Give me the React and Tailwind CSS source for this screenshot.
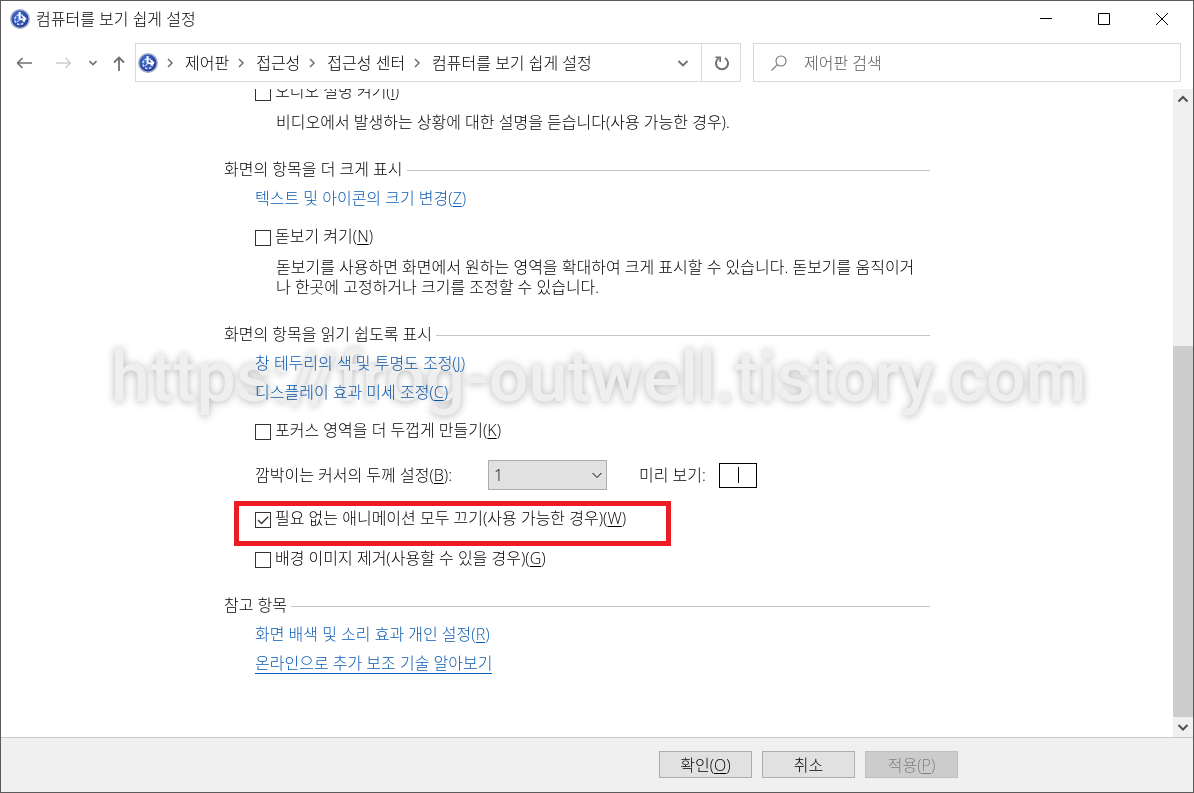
import React, { useState } from 'react';

const crumbs = ['제어판', '접근성', '접근성 센터', '컴퓨터를 보기 쉽게 설정'];

function EaseIcon() {
  return (
    <svg viewBox="0 0 20 20" className="w-5 h-5 shrink-0" aria-hidden="true">
      <defs>
        <radialGradient id="ease" cx="0.4" cy="0.35" r="0.7">
          <stop offset="0" stopColor="#4a76d0" />
          <stop offset="0.6" stopColor="#2c4cb0" />
          <stop offset="1" stopColor="#24348c" />
        </radialGradient>
      </defs>
      <circle cx="10" cy="10" r="9.2" fill="url(#ease)" stroke="#a3acc9" strokeWidth="1.5" />
      <circle cx="9.800" cy="10.600" r="4.900" fill="none" stroke="#c9dafa" strokeWidth="1.600" strokeDasharray="2.600 1.250" />
      <path d="M9.600 3v7.600" fill="none" stroke="#fff" strokeWidth="2" />
      <path d="M9.600 10.600l5.600-.8M12.400 7l3.200 2.800-2.900 2.600" fill="none" stroke="#fff" strokeWidth="1.500" />
      <path d="M9.600 10.600l-2.600 2.600" fill="none" stroke="#b9cef5" strokeWidth="1.200" />
    </svg>
  );
}

function Chevron({ d, className }) {
  return (
    <svg viewBox="0 0 12 12" className={`w-3 h-3 shrink-0 ${className}`} fill="none" stroke="currentColor" aria-hidden="true">
      <path d={d} />
    </svg>
  );
}

const DOWN = 'M1.5 4l4.5 4.5L10.500 4';
const UP = 'M1.500 8.500L6 4l4.500 4.500';
const RIGHT = 'M4 2l4 4-4 4';

function Hotkey({ k }) {
  return (
    <>(<span className="underline underline-offset-2">{k}</span>)</>
  );
}

function CheckRow({ id, label, hotkey, defaultChecked, className }) {
  const [checked, setChecked] = useState(!!defaultChecked);
  return (
    <div className={`flex items-center gap-1 ${className || ''}`}>
      <span className="relative mt-1 w-4 h-4 shrink-0">
        <input
          id={id}
          type="checkbox"
          checked={checked}
          onChange={e => setChecked(e.target.checked)}
          className="block appearance-none w-4 h-4 border border-[#333] bg-white"
        />
        {checked && (
          <svg viewBox="0 0 16 16" className="absolute inset-0 w-4 h-4 pointer-events-none" fill="none" stroke="#333" strokeWidth="1.3">
            <path d="M3 8l3.500 3.500L13.200 4.700" />
          </svg>
        )}
      </span>
      <label htmlFor={id}>{label}<Hotkey k={hotkey} /></label>
    </div>
  );
}

function Section({ title, children }) {
  return (
    <section className="mt-[27px]">
      <div className="flex items-center gap-1">
        <h2>{title}</h2>
        <div className="flex-1 mt-[2px] h-px bg-[#c4c4c4]" />
      </div>
      <div className="pl-[31px] flex flex-col items-start">{children}</div>
    </section>
  );
}

function TaskLink({ children, hotkey }) {
  return (
    <a href="#" className="mt-[9px] text-[#0b5cb5]">
      {children}<Hotkey k={hotkey} />
    </a>
  );
}

function TitleBar() {
  return (
    <header className="flex items-center h-9 shrink-0 pl-[9px] pr-[2px]">
      <EaseIcon />
      <h1 className="ml-[6px] flex-1">컴퓨터를 보기 쉽게 설정</h1>
      <div className="flex h-full text-black">
        <button aria-label="최소화" className="w-[58px] flex items-center justify-center">
          <svg className="w-3 h-3" viewBox="0 0 12 12" stroke="currentColor"><path d="M0 5.500h12" /></svg>
        </button>
        <button aria-label="최대화" className="w-[58px] flex items-center justify-center">
          <svg className="w-3 h-3" viewBox="0 0 12 12" fill="none" stroke="currentColor"><path d="M.5.5h11v11H.5z" /></svg>
        </button>
        <button aria-label="닫기" className="w-[58px] flex items-center justify-center">
          <svg className="w-3 h-3" viewBox="0 0 12 12" stroke="currentColor"><path d="M0 0l12 12M12 0L0 12" /></svg>
        </button>
      </div>
    </header>
  );
}

function AddressBar() {
  return (
    <div className="flex items-center shrink-0 mt-[6px] pl-[14px] pr-3 text-[#707070]">
      <button aria-label="뒤로" className="w-5 flex justify-center">
        <svg className="w-4 h-4" viewBox="0 0 16 16" fill="none" stroke="currentColor" strokeWidth="1.6"><path d="M15 8H.5M5.500 3L.5 8l5 5" /></svg>
      </button>
      <button aria-label="앞으로" disabled className="ml-[18px] w-5 flex justify-center text-[#ccc]">
        <svg className="w-4 h-4" viewBox="0 0 16 16" fill="none" stroke="currentColor" strokeWidth="1.4"><path d="M1 8h14.500M10.500 3l5 5-5 5" /></svg>
      </button>
      <button aria-label="최근 위치" className="ml-3 w-4 flex justify-center">
        <svg className="w-2 h-2" viewBox="0 0 8 8" fill="none" stroke="currentColor" strokeWidth="1.6"><path d="M.5 2L4 5.500 7.500 2" /></svg>
      </button>
      <button aria-label="위로" className="ml-[10px] mr-2 w-4 flex justify-center">
        <svg className="w-4 h-4" viewBox="0 0 16 16" fill="none" stroke="currentColor" strokeWidth="1.8"><path d="M8 16V2.500M3 7.500l5-5 5 5" /></svg>
      </button>
      <div className="flex flex-1 items-center h-[39px] border border-[#d9d9d9] pl-[2px]">
        <EaseIcon />
        <nav className="flex flex-1 items-center text-black">
          {crumbs.map(c => (
            <React.Fragment key={c}>
              <span className="w-[27px] flex justify-center pr-1 text-[#707070]">
                <Chevron d={RIGHT} className="stroke-[1.5]" />
              </span>
              <a href="#">{c}</a>
            </React.Fragment>
          ))}
        </nav>
        <button aria-label="이전 위치" className="w-9 h-full flex items-center justify-center">
          <Chevron d={DOWN} className="stroke-[1.8]" />
        </button>
        <button aria-label="새로 고침" className="w-[39px] h-full flex items-center justify-center border-l border-[#d9d9d9]">
          <svg className="w-4 h-4" viewBox="0 0 16 16" fill="none" stroke="currentColor" strokeWidth="2">
            <path d="M12 3a6 6 0 1 1-6 0" />
            <path d="M2.500 2.200h4.700v4.800" strokeWidth="1.600" />
          </svg>
        </button>
      </div>
      <div className="ml-3 flex items-center w-[428px] h-[39px] border border-[#d9d9d9] pl-[17px]">
        <svg className="w-4 h-4" viewBox="0 0 16 16" fill="none" stroke="#777" strokeWidth="1.1" aria-hidden="true">
          <circle cx="10" cy="6" r="5" />
          <path d="M6.500 9.500L.5 15.500" />
        </svg>
        <input
          type="search"
          aria-label="제어판 검색"
          placeholder="제어판 검색"
          className="ml-[17px] flex-1 min-w-0 bg-transparent outline-none placeholder:text-[#5a5a5a]"
        />
      </div>
    </div>
  );
}

function ScrollBar() {
  return (
    <div className="flex flex-col w-5 shrink-0 bg-[#f0f0f0] text-[#505050]">
      <button aria-label="위로 스크롤" className="h-5 flex items-center justify-center"><Chevron d={UP} className="stroke-2" /></button>
      <div className="flex-1 flex flex-col">
        <div className="flex-[237]" />
        <div className="flex-[370] bg-[#cdcdcd]" />
      </div>
      <button aria-label="아래로 스크롤" className="h-5 flex items-center justify-center"><Chevron d={DOWN} className="stroke-2" /></button>
    </div>
  );
}

export default function App() {
  return (
    <div className="relative flex flex-col h-screen border border-[#5a5a5a] bg-white text-black text-[16px] leading-5 font-light font-['Open_Sans','Noto_Sans_CJK_KR',sans-serif]">
      <TitleBar />
      <AddressBar />

      <div className="flex flex-1 min-h-0 mt-[7px]">
        <main className="relative flex-1 overflow-hidden pl-[223px]">
          <div className="-mt-2 max-w-[706px]">
            <div className="pl-[31px]">
              <CheckRow id="audio" label="오디오 설명 켜기" hotkey="I" />
              <p className="mt-[11px] pl-[21px]">비디오에서 발생하는 상황에 대한 설명을 듣습니다(사용 가능한 경우).</p>
            </div>

            <Section title="화면의 항목을 더 크게 표시">
              <TaskLink hotkey="Z">텍스트 및 아이콘의 크기 변경</TaskLink>
              <CheckRow id="magnifier" label="돋보기 켜기" hotkey="N" className="mt-[18px]" />
              <p className="mt-[11px] pl-[21px] break-all">
                돋보기를 사용하면 화면에서 원하는 영역을 확대하여 크게 표시할 수 있습니다. 돋보기를 움직이거<br />
                나 한곳에 고정하거나 크기를 조정할 수 있습니다.
              </p>
            </Section>

            <Section title="화면의 항목을 읽기 쉽도록 표시">
              <TaskLink hotkey="J">창 테두리의 색 및 투명도 조정</TaskLink>
              <TaskLink hotkey="C">디스플레이 효과 미세 조정</TaskLink>
              <CheckRow id="focus" label="포커스 영역을 더 두껍게 만들기" hotkey="K" className="mt-[18px]" />

              <div className="mt-5 flex items-center">
                <label htmlFor="cursor" className="w-[233px]">깜박이는 커서의 두께 설정<Hotkey k="B" />:</label>
                <div className="relative">
                  <select id="cursor" defaultValue="1" className="block appearance-none w-[119px] h-[30px] pl-[5px] border border-[#adadad] bg-[#e1e1e1]">
                    {[1, 2, 3, 4, 5].map(n => <option key={n}>{n}</option>)}
                  </select>
                  <Chevron d={DOWN} className="absolute right-1 top-[9px] pointer-events-none" />
                </div>
                <span className="ml-8 w-20">미리 보기:</span>
                <div className="w-[38px] h-[25px] flex items-center justify-center border border-black">
                  <div className="w-px h-4 bg-black" />
                </div>
              </div>

              <div className="relative mt-[18px]">
                <CheckRow id="animation" label="필요 없는 애니메이션 모두 끄기(사용 가능한 경우)" hotkey="W" defaultChecked />
                <div className="absolute -left-[21px] -top-[7px] w-[437px] h-[45px] border-[5px] border-[#ed1c24] pointer-events-none" />
              </div>
              <CheckRow id="background" label="배경 이미지 제거(사용할 수 있을 경우)" hotkey="G" className="mt-5" />
            </Section>

            <Section title="참고 항목">
              <TaskLink hotkey="R">화면 배색 및 소리 효과 개인 설정</TaskLink>
              <a href="#" className="mt-[9px] text-[#0b5cb5] border-b border-[#0b5cb5]">온라인으로 추가 보조 기술 알아보기</a>
            </Section>
          </div>

          <div className="absolute left-[110px] top-[244px] whitespace-nowrap text-[70px] leading-[88px] font-medium font-[Roboto,sans-serif] text-[#efefef] [text-shadow:0_1px_8px_rgb(0_0_0/0.3)] mix-blend-multiply pointer-events-none select-none">
            https://frog-outwell.tistory.com
          </div>
        </main>
        <ScrollBar />
      </div>

      <footer className="flex items-center justify-end gap-[10px] h-[55px] shrink-0 pr-[235px] pb-px border-t border-[#c8c8c8] bg-[#f0f0f0]">
        <button className="w-[93px] h-[27px] border border-[#adadad] bg-[#e1e1e1]">확인<Hotkey k="O" /></button>
        <button className="w-[93px] h-[27px] border border-[#adadad] bg-[#e1e1e1]">취소</button>
        <button disabled className="w-[93px] h-[27px] border border-[#bfbfbf] bg-[#cccccc] text-[#808080]">적용<Hotkey k="P" /></button>
      </footer>
    </div>
  );
}
